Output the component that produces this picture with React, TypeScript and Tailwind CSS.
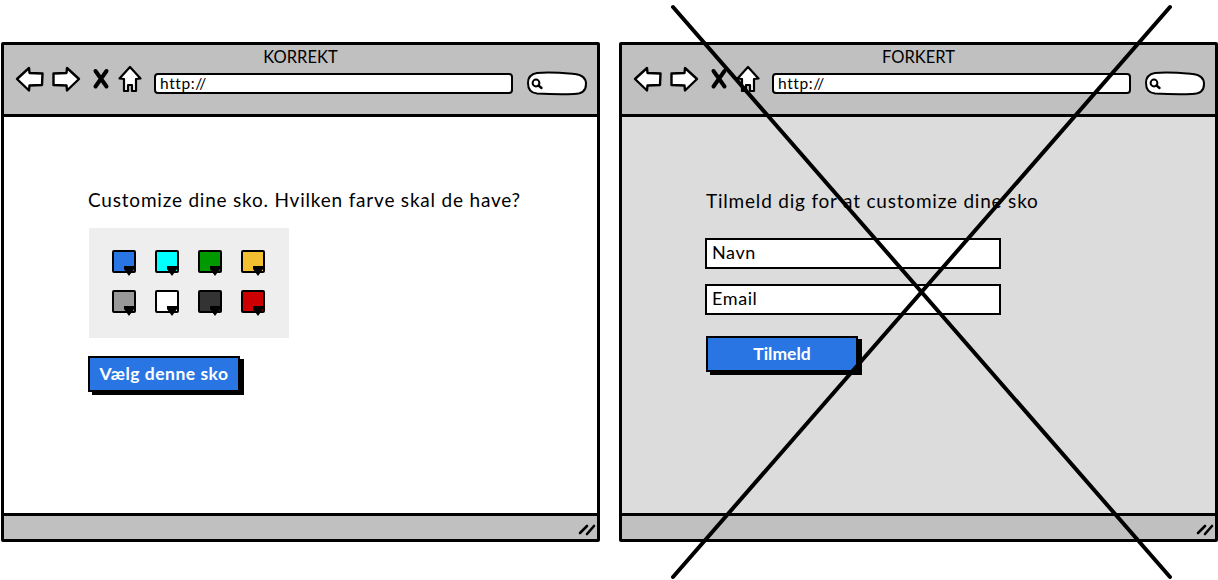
const swatches = ["bg-[#2a75e4]", "bg-[#00ffff]", "bg-[#009900]", "bg-[#f2c031]", "bg-[#999999]", "bg-white", "bg-[#333333]", "bg-[#cc0000]"];

function BackIcon() {
  return (
    <svg width="30" height="28" viewBox="0 0 30 28" className="shrink-0">
      <path d="M2 14 L14 3 L14.5 8 L27.5 8.5 L27 20 L14.5 20.5 L14 25.5 Z" fill="#fff" stroke="#000" strokeWidth="2.4" strokeLinejoin="round" />
    </svg>
  );
}

function ForwardIcon() {
  return (
    <svg width="30" height="28" viewBox="0 0 30 28" className="shrink-0">
      <path d="M28 14 L16 3 L15.5 8 L2.5 8.5 L2.5 20 L15.5 20.5 L16 25.5 Z" fill="#fff" stroke="#000" strokeWidth="2.4" strokeLinejoin="round" />
    </svg>
  );
}

function CloseIcon() {
  return (
    <svg width="18" height="22" viewBox="0 0 18 22" className="shrink-0">
      <path d="M3.5 3 L14.5 18.5 M14.5 3 L3.5 18.5" fill="none" stroke="#000" strokeWidth="4" strokeLinecap="round" />
    </svg>
  );
}

function HomeIcon() {
  return (
    <svg width="24" height="28" viewBox="0 0 24 28" className="shrink-0">
      <path d="M12 2 L22.5 13.5 L18 14 L18 26 L14 26 L14 20 L10 20 L10 26 L6 26 L6 14 L1.5 13.5 Z" fill="#fff" stroke="#000" strokeWidth="2.2" strokeLinejoin="round" />
    </svg>
  );
}

function SearchPill() {
  return (
    <svg width="62" height="25" viewBox="0 0 62 25" className="shrink-0">
      <path d="M11 2 C24 0.5 38 2 49 3 C57 4 60 8 60 13 C60 20 56 23 48 23 C34 23.5 20 23 11 22.5 C5 22 2 18 2 12 C2 6 5 3 11 2 Z" fill="#fff" stroke="#000" strokeWidth="2" />
      <circle cx="10" cy="12" r="3.4" fill="none" stroke="#000" strokeWidth="2" />
      <path d="M12.5 14.5 L15.5 17" stroke="#000" strokeWidth="2.4" strokeLinecap="round" />
    </svg>
  );
}

function Grip() {
  return (
    <svg width="18" height="14" viewBox="0 0 18 14" className="shrink-0">
      <path d="M2 11 L9 4 M9 12 L16 4" fill="none" stroke="#000" strokeWidth="2.6" strokeLinecap="round" />
    </svg>
  );
}

function Swatch({ color }: { color: string }) {
  return (
    <div className={`relative w-[24px] h-[23px] border-2 border-black rounded-[2px] ${color}`}>
      <svg width="12" height="10" viewBox="0 0 12 10" className="absolute left-[9px] top-[14px]">
        <path d="M1 0 L11 0 L11 3 L6 10 L1 3 Z" fill="#000" />
      </svg>
    </div>
  );
}

function SketchButton({ label, tracking }: { label: string; tracking: string }) {
  return (
    <div className={`flex items-center justify-center w-[152px] h-[36px] bg-[#2a75e4] border-2 border-black shadow-[4px_3px_0_#000] text-white text-[17.5px] font-bold ${tracking}`}>
      {label}
    </div>
  );
}

function Field({ label }: { label: string }) {
  return (
    <div className="flex items-center w-[296px] h-[31px] bg-white border-2 border-black pl-[5px] pb-[2px] text-[18px] tracking-[0.6px] text-black">
      {label}
    </div>
  );
}

function BrowserWindow({ title, body, children }: { title: string; body: string; children: React.ReactNode }) {
  return (
    <div className="flex flex-col w-[599px] h-[500px] border-[3px] border-black rounded-[2px] bg-white">
      <div className="flex flex-col h-[72px] bg-[#c0c0c0] border-b-[3px] border-black shrink-0">
        <div className="text-center text-[16.5px] leading-[24px] text-black">{title}</div>
        <div className="flex items-center h-[30px] pl-[11px]">
          <div className="mb-[10px]"><BackIcon /></div>
          <div className="ml-[6px] mb-[10px]"><ForwardIcon /></div>
          <div className="ml-[11px] mb-[10px]"><CloseIcon /></div>
          <div className="ml-[8px] mb-[10px]"><HomeIcon /></div>
          <div className="flex items-end ml-[12px] mb-[2px] w-[359px] h-[21px] bg-white border-2 border-black rounded-[4px] pl-[4px] text-[15.5px] tracking-[0.6px] text-black leading-[17px] overflow-hidden">
            http://
          </div>
          <div className="ml-[13px] mb-[2px]"><SearchPill /></div>
        </div>
      </div>
      <div className={`flex-1 ${body}`}>{children}</div>
      <div className="flex items-center justify-end h-[26px] bg-[#c0c0c0] border-t-[3px] border-black pr-[1px] pt-[3px] shrink-0">
        <Grip />
      </div>
    </div>
  );
}

export default function App() {
  return (
    <div className="relative w-[1218px] h-[580px] bg-white overflow-hidden font-['Lato',sans-serif] text-black">
      <div className="flex gap-[19px] pt-[42px] pl-px">
        <BrowserWindow title="KORREKT" body="bg-white">
          <div className="flex flex-col items-start pt-[71px] pl-[84px]">
            <div className="text-[19px] leading-[24px] tracking-[0.8px] whitespace-nowrap">
              Customize dine sko. Hvilken farve skal de have?
            </div>
            <div className="grid grid-cols-[repeat(4,24px)] gap-x-[19px] gap-y-[17px] w-[200px] h-[110px] mt-[16px] ml-px pt-[22px] pl-[23px] bg-[#eeeeee] content-start">
              {swatches.map((c, i) => (
                <Swatch key={i} color={c} />
              ))}
            </div>
            <div className="mt-[18px]">
              <SketchButton label="Vælg denne sko" tracking="tracking-[0.5px]" />
            </div>
          </div>
        </BrowserWindow>
        <BrowserWindow title="FORKERT" body="bg-[#dcdcdc]">
          <div className="flex flex-col items-start pt-[72px] pl-[84px]">
            <div className="text-[19px] leading-[24px] tracking-[0.8px] whitespace-nowrap">
              Tilmeld dig for at customize dine sko
            </div>
            <div className="flex flex-col gap-[15px] mt-[25px] -ml-px">
              <Field label="Navn" />
              <Field label="Email" />
            </div>
            <div className="mt-[21px]">
              <SketchButton label="Tilmeld" tracking="tracking-normal" />
            </div>
          </div>
        </BrowserWindow>
      </div>
      <svg width="1218" height="580" viewBox="0 0 1218 580" className="absolute left-0 top-0 pointer-events-none">
        <path d="M673 7 L1170 577 M1170 7 L673 577" fill="none" stroke="#000" strokeWidth="4" strokeLinecap="round" />
      </svg>
    </div>
  );
}
